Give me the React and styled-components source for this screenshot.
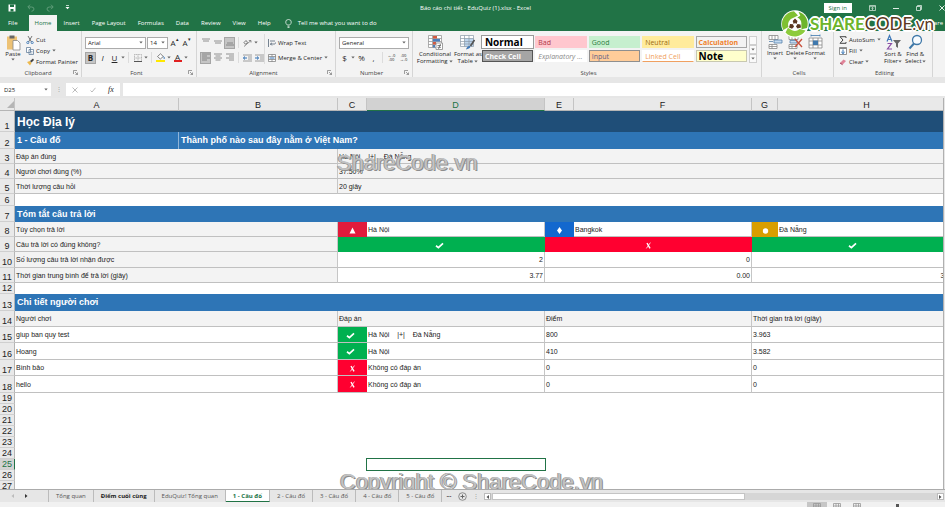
import React from "react";
import styled, { createGlobalStyle, css } from "styled-components";

const menuTabs = [
  "File",
  "Home",
  "Insert",
  "Page Layout",
  "Formulas",
  "Data",
  "Review",
  "View",
  "Help",
];

const cellStyles = [
  { name: "Normal", kind: "normal" },
  { name: "Bad", kind: "bad" },
  { name: "Good", kind: "good" },
  { name: "Neutral", kind: "neutral" },
  { name: "Calculation", kind: "calculation" },
  { name: "Check Cell", kind: "check" },
  { name: "Explanatory ...", kind: "explanatory" },
  { name: "Input", kind: "input" },
  { name: "Linked Cell", kind: "linked" },
  { name: "Note", kind: "note" },
];

const columns = [
  { name: "A", width: 164 },
  { name: "B", width: 159 },
  { name: "C", width: 29 },
  { name: "D", width: 178 },
  { name: "E", width: 29 },
  { name: "F", width: 178 },
  { name: "G", width: 26 },
  { name: "H" },
];

const bothCities = "Hà Nội \u00a0\u00a0 |+| \u00a0\u00a0 Đà Nẵng";

const players = [
  { row: 15, height: 16, name: "giup ban quy test", ok: true, answer: bothCities, score: "800", time: "3.963" },
  { row: 16, height: 17, name: "Hoang", ok: true, answer: "Hà Nội", score: "410", time: "3.582" },
  { row: 17, height: 16, name: "Bình bảo", ok: false, answer: "Không có đáp án", score: "0", time: "0" },
  { row: 18, height: 17, name: "hello", ok: false, answer: "Không có đáp án", score: "0", time: "0" },
];

const emptyRows = [19, 20, 21, 22, 23, 24, 25, 26, 27];

const sheets = [
  "Tổng quan",
  "Điểm cuối cùng",
  "EduQuiz! Tổng quan",
  "1 - Câu đố",
  "2 - Câu đố",
  "3 - Câu đố",
  "4 - Câu đố",
  "5 - Câu đố",
];

function Caret() {
  return (
    <Svg $w={4} $h={3} viewBox="0 0 4 3">
      <path d="M.3.5h3.400L2 2.400z" fill="#666" />
    </Svg>
  );
}

function Check() {
  return (
    <Svg $w={13} $h={7} viewBox="0 0 13 7">
      <path d="M1 3.800 3.400 5.600 8 1.400" fill="none" stroke="#fff" strokeWidth="1.700" />
    </Svg>
  );
}

function Cross() {
  return (
    <Svg $w={7} $h={7} viewBox="0 0 7 7">
      <path d="M2 1l3 5.400" stroke="#fff" strokeWidth="1.400" />
      <path d="M5.400.6 1.400 6.400" stroke="#fff" strokeWidth=".8" />
    </Svg>
  );
}

function Lines({ widths, align = "start", top = 0 }) {
  return (
    <Svg $w={8} $h={9} viewBox="0 0 8 9">
      {widths.map((w, i) => {
        const x = align === "start" ? 0 : align === "end" ? 8 - w : (8 - w) / 2;
        return <path key={i} d={`M${x} ${top + 1 + i * 2}h${w}`} stroke="#777" strokeWidth=".8" />;
      })}
    </Svg>
  );
}

function Indent({ flip }) {
  return (
    <Svg $w={9} $h={8} viewBox="0 0 9 8">
      <path d="M0 1h9M5 3h4M5 5h4M0 7h9" stroke="#888" strokeWidth=".8" />
      <path d={flip ? "M0 4h3.500M2 2.500 3.600 4 2 5.500" : "M4 4H.5M2 2.500.4 4 2 5.500"} fill="none" stroke="#2f6fb3" />
    </Svg>
  );
}

function CellsIcon({ kind }) {
  return (
    <Svg $w={15} $h={16} viewBox="0 0 15 16">
      {kind !== "format" && (
        <path d="M1 1.500h9v4H1zM4 1.500v4M7 1.500v4M1 10.500h8v4H1zM4 10.500v4M1 12.500h8" fill="#fff" stroke="#888" strokeWidth=".8" />
      )}
      {kind === "insert" && <path d="M6 6h8v3H6zM5 7.500H1" fill="#c5dcf2" stroke="#5582ab" strokeWidth=".8" />}
      {kind === "delete" && (
        <>
          <path d="M2 6.500h7v2.500H2z" fill="#c5dcf2" stroke="#5582ab" strokeWidth=".8" />
          <path d="M7 5l7 8M14 5l-7 8" stroke="#c8503c" strokeWidth="1.300" />
        </>
      )}
      {kind === "format" && (
        <>
          <path d="M1 4h13v10H1zM1 7h13M1 11h13M5 4v10M10 4v10" fill="#fff" stroke="#888" strokeWidth=".8" />
          <path d="M5 6.500h5v4.500H5z" fill="#3f78ad" />
          <path d="M3 1.500h9M3 .5v2M12 .5v2" stroke="#3f78ad" strokeWidth=".8" />
        </>
      )}
    </Svg>
  );
}

function Launcher() {
  return (
    <LauncherButton aria-label="More options">
      <Svg $w={5} $h={5} viewBox="0 0 5 5">
        <path d="M.5 4V.5H4M2 2l2.500 2.500M4.500 2.500v2h-2" fill="none" stroke="#777" strokeWidth=".7" />
      </Svg>
    </LauncherButton>
  );
}

function Ribbon() {
  return (
    <RibbonBar>
      <Group $width={82}>
        <GroupBody>
          <BigButton>
            <Svg $w={15} $h={17} viewBox="0 0 15 17">
              <path d="M1 2.500h10v13H1z" fill="#edc275" />
              <path d="M3.500 1.500h5v3h-5z" fill="#666" />
              <path d="M7 6.500h4.500l2.500 2.500v7H7z" fill="#fff" stroke="#888" strokeWidth=".8" />
            </Svg>
            <span>Paste</span>
            <Caret />
          </BigButton>
          <Stack>
            <SmallButton>
              <Svg $w={8} $h={8} viewBox="0 0 8 8">
                <path d="M2 0l3.500 6M6 0 2.500 6" stroke="#555" strokeWidth=".8" />
                <circle cx="1.800" cy="6.600" r="1.100" fill="none" stroke="#2f6fb3" strokeWidth=".8" />
                <circle cx="6.200" cy="6.600" r="1.100" fill="none" stroke="#2f6fb3" strokeWidth=".8" />
              </Svg>
              Cut
            </SmallButton>
            <SmallButton>
              <Svg $w={8} $h={8} viewBox="0 0 8 8">
                <path d="M.5.500h4v5h-4zM3 2.500h4.500v5H3z" fill="#fff" stroke="#66809c" strokeWidth=".8" />
                <path d="M4 4.500h2.500M4 6h2.500" stroke="#66809c" strokeWidth=".6" />
              </Svg>
              Copy
              <Caret />
            </SmallButton>
            <SmallButton>
              <Svg $w={8} $h={8} viewBox="0 0 8 8">
                <path d="M1 4l3-1 1.500 2L4 7.500z" fill="#edb94c" />
                <path d="M4 3l3-2.500 1 1.500-2.500 2.500z" fill="#444" />
              </Svg>
              Format Painter
            </SmallButton>
          </Stack>
        </GroupBody>
        <GroupLabel><span>Clipboard</span><Launcher /></GroupLabel>
      </Group>

      <Group $width={115}>
        <GroupRows>
          <ToolRow>
            <SelectBox $width={61}>
              <select aria-label="Font"><option>Arial</option></select>
              <Caret />
            </SelectBox>
            <SelectBox $width={21}>
              <select aria-label="Font size"><option>14</option></select>
              <Caret />
            </SelectBox>
            <Tool aria-label="Increase font size">A<sup>▴</sup></Tool>
            <Tool aria-label="Decrease font size">A<sup>▾</sup></Tool>
          </ToolRow>
          <ToolRow>
            <Tool $pressed><b>B</b></Tool>
            <Tool><i>I</i></Tool>
            <Tool><u>U</u></Tool>
            <Caret />
            <Divider />
            <Tool aria-label="Borders">
              <Svg $w={8} $h={8} viewBox="0 0 8 8">
                <path d="M.5.500h7v7h-7zM4 .5v7M.5 4h7" fill="none" stroke="#999" strokeWidth=".7" strokeDasharray="1 .6" />
                <path d="M0 7.500h8" stroke="#555" />
              </Svg>
            </Tool>
            <Caret />
            <Divider />
            <Tool aria-label="Fill color">
              <Svg $w={9} $h={9} viewBox="0 0 9 9">
                <path d="M1.500 3.500 4.500.8l2.800 2.700-3 2.500z" fill="#fff" stroke="#666" strokeWidth=".8" />
                <path d="M7.500 3.500c1 1 1 2 .3 2.500" fill="none" stroke="#2f6fb3" />
                <path d="M0 7h9v2H0z" fill="#ffe800" />
              </Svg>
            </Tool>
            <Caret />
            <Tool aria-label="Font color"><FontColor>A</FontColor></Tool>
            <Caret />
          </ToolRow>
        </GroupRows>
        <GroupLabel><span>Font</span><Launcher /></GroupLabel>
      </Group>

      <Group $width={139}>
        <GroupBody>
          <GroupRows $width={64}>
            <ToolRow>
              <Tool aria-label="Top align"><Lines widths={[8, 6]} align="center" /></Tool>
              <Tool aria-label="Middle align"><Lines widths={[8, 6]} align="center" top={2} /></Tool>
              <Tool $pressed aria-label="Bottom align"><Lines widths={[6, 8]} align="center" top={4} /></Tool>
              <Divider />
              <Tool aria-label="Orientation">
                <Svg $w={9} $h={8} viewBox="0 0 9 8">
                  <path d="M1 7.500 8 1.500M5.800 1.500H8v2" fill="none" stroke="#777" strokeWidth=".8" />
                  <path d="M1 3.500l2-2 1.500 1.800-2 2z" fill="none" stroke="#555" strokeWidth=".8" />
                </Svg>
              </Tool>
              <Caret />
            </ToolRow>
            <ToolRow>
              <Tool $pressed aria-label="Align left"><Lines widths={[8, 5, 8, 5]} /></Tool>
              <Tool aria-label="Center"><Lines widths={[8, 5, 8, 5]} align="center" /></Tool>
              <Tool aria-label="Align right"><Lines widths={[8, 5, 8, 5]} align="end" /></Tool>
              <Divider />
              <Tool aria-label="Decrease indent"><Indent /></Tool>
              <Tool aria-label="Increase indent"><Indent flip /></Tool>
            </ToolRow>
          </GroupRows>
          <GroupRows $line>
            <ToolRow>
              <SmallButton>
                <Svg $w={8} $h={8} viewBox="0 0 8 8">
                  <path d="M.5 0v8M2 2h5M2 5h4.500q1 0 1-1.500M4 3.800 2.500 5 4 6.500" fill="none" stroke="#567" strokeWidth=".8" />
                </Svg>
                Wrap Text
              </SmallButton>
            </ToolRow>
            <ToolRow>
              <SmallButton>
                <Svg $w={8} $h={8} viewBox="0 0 8 8">
                  <path d="M.5.500h7v7h-7zM.5 2.500h7M.5 5.500h7M4 .5v2M4 5.500v2" fill="#fff" stroke="#777" strokeWidth=".7" />
                  <path d="M1.500 4h5" stroke="#2f6fb3" />
                </Svg>
                Merge &amp; Center
                <Caret />
              </SmallButton>
            </ToolRow>
          </GroupRows>
        </GroupBody>
        <GroupLabel><span>Alignment</span><Launcher /></GroupLabel>
      </Group>

      <Group $width={77}>
        <GroupRows>
          <ToolRow>
            <SelectBox $width={70}>
              <select aria-label="Number format"><option>General</option></select>
              <Caret />
            </SelectBox>
          </ToolRow>
          <ToolRow>
            <Tool>$</Tool>
            <Caret />
            <Tool>%</Tool>
            <Tool>,</Tool>
            <Divider />
            <Tool aria-label="Increase decimal"><Decimal>←.0<br />.00</Decimal></Tool>
            <Tool aria-label="Decrease decimal"><Decimal>.00<br />→.0</Decimal></Tool>
          </ToolRow>
        </GroupRows>
        <GroupLabel><span>Number</span><Launcher /></GroupLabel>
      </Group>

      <Group $grow>
        <GroupBody>
          <BigButton $wide>
            <Svg $w={15} $h={17} viewBox="0 0 15 17">
              <path d="M.5 1.500h13v12H.5zM.5 4.500h13M.5 7.500h13M.5 10.500h13M4.500 1.500v12" fill="#fff" stroke="#999" strokeWidth=".8" />
              <path d="M5 2h4v2.500H5zM5 8h3v2.500H5z" fill="#d4593f" />
              <path d="M5 5h7v2.500H5zM5 11h2v2.500H5z" fill="#4c7ebb" />
              <path d="M8 9h6.500v6.500H8z" fill="#fff" stroke="#888" strokeWidth=".8" />
              <path d="M9.500 11.500h3.500M9.500 13.300h3.500M12.500 10l-2 5" stroke="#555" strokeWidth=".7" />
            </Svg>
            <span>Conditional</span>
            <span>Formatting <Caret /></span>
          </BigButton>
          <BigButton>
            <Svg $w={15} $h={17} viewBox="0 0 15 17">
              <path d="M.5 1.500h13v11H.5z" fill="#fff" />
              <path d="M4.500 4.500h9v8h-9z" fill="#bcd5ed" />
              <path d="M.5 1.500h13v11H.5zM.5 4.500h13M.5 7.500h13M.5 10h13M4.500 1.500v11M9 1.500v11" fill="none" stroke="#8a9aa8" strokeWidth=".7" />
              <path d="M14.500 6l-4 6" stroke="#555" strokeWidth="1.800" />
              <path d="M6 15.500q1-4 4-3.500 1.500 2-4 3.500z" fill="#3f78b8" />
            </Svg>
            <span>Format as</span>
            <span>Table <Caret /></span>
          </BigButton>
          <Gallery>
            {cellStyles.map((s) => (
              <StyleSwatch key={s.kind} $kind={s.kind}>{s.name}</StyleSwatch>
            ))}
          </Gallery>
          <GalleryScroll>
            <button aria-label="Previous styles" />
            <button aria-label="Next styles"><Caret /></button>
            <button aria-label="More styles"><Caret /></button>
          </GalleryScroll>
        </GroupBody>
        <GroupLabel><span>Styles</span></GroupLabel>
      </Group>

      <Group $width={72}>
        <GroupBody>
          <BigButton><CellsIcon kind="insert" /><span>Insert</span><Caret /></BigButton>
          <BigButton><CellsIcon kind="delete" /><span>Delete</span><Caret /></BigButton>
          <BigButton><CellsIcon kind="format" /><span>Format</span><Caret /></BigButton>
        </GroupBody>
        <GroupLabel><span>Cells</span></GroupLabel>
      </Group>

      <Group $width={99}>
        <GroupBody $gap={2}>
          <Stack $wide>
            <SmallButton>
              <Svg $w={8} $h={8} viewBox="0 0 8 8">
                <path d="M7 2V.7H1l3 3.300-3 3.300h6V6" fill="none" stroke="#444" />
              </Svg>
              AutoSum
              <Caret />
            </SmallButton>
            <SmallButton>
              <Svg $w={8} $h={8} viewBox="0 0 8 8">
                <path d="M.5.500h7v7h-7z" fill="#fff" stroke="#777" strokeWidth=".8" />
                <path d="M.5.500h7v1.500h-7z" fill="#888" />
                <path d="M4 2.500v4M2.300 5 4 6.600 5.700 5" fill="none" stroke="#2f6fb3" />
              </Svg>
              Fill
              <Caret />
            </SmallButton>
            <SmallButton>
              <Svg $w={8} $h={8} viewBox="0 0 8 8">
                <path d="M1 5l3.500-3.500 2.500 1.500L3.500 6.700z" fill="#e08398" />
                <path d="M1 5l2.500 1.700" stroke="#a34a60" />
              </Svg>
              Clear
              <Caret />
            </SmallButton>
          </Stack>
          <BigButton>
            <Svg $w={15} $h={17} viewBox="0 0 15 17">
              <path d="M1 7.500 3.500 1.500 6 7.500M2 5.500h3" fill="none" stroke="#3f78b8" strokeWidth="1.200" />
              <path d="M1.500 9.500h4L1.500 15H6" fill="none" stroke="#8a4ea5" strokeWidth="1.200" />
              <path d="M7 6h8l-3 3.500V14l-2-1.500v-3z" fill="#666" />
            </Svg>
            <span>Sort &amp;</span>
            <span>Filter<Caret /></span>
          </BigButton>
          <BigButton>
            <Svg $w={15} $h={17} viewBox="0 0 15 17">
              <circle cx="9" cy="6" r="4.500" fill="#f7fbff" stroke="#3f78a8" strokeWidth="1.300" />
              <path d="M6 9.500 1.500 14.500" stroke="#3f78a8" strokeWidth="2" />
            </Svg>
            <span>Find &amp;</span>
            <span>Select<Caret /></span>
          </BigButton>
        </GroupBody>
        <GroupLabel><span>Editing</span></GroupLabel>
      </Group>
      <RibbonEnd />
    </RibbonBar>
  );
}

function Sheet() {
  return (
    <SheetArea>
      <Grid>
        <colgroup>
          <Col $width={15} />
          {columns.map((c) => <Col key={c.name} $width={c.width} />)}
        </colgroup>
        <thead>
          <Row $height={13}>
            <ColHead>
              <Svg $w={7} $h={7} viewBox="0 0 7 7"><path d="M7 0v7H0z" fill="#b5b5b5" /></Svg>
            </ColHead>
            {columns.map((c) => (
              <ColHead key={c.name} $selected={c.name === "D"}>{c.name}</ColHead>
            ))}
          </Row>
        </thead>
        <tbody>
          <Row $height={21}>
            <RowHead>1</RowHead>
            <TitleCell colSpan={8}>Học Địa lý</TitleCell>
          </Row>
          <Row $height={17}>
            <RowHead>2</RowHead>
            <SectionCell $line>1 - Câu đố</SectionCell>
            <SectionCell colSpan={7}>Thành phố nào sau đây nằm ở Việt Nam?</SectionCell>
          </Row>
          <Row $height={15}>
            <RowHead>3</RowHead>
            <Cell $shade colSpan={2}>Đáp án đúng</Cell>
            <Cell $shade colSpan={6}>{bothCities}</Cell>
          </Row>
          <Row $height={15}>
            <RowHead>4</RowHead>
            <Cell $shade colSpan={2}>Người chơi đúng (%)</Cell>
            <Cell $shade colSpan={6}>37.50%</Cell>
          </Row>
          <Row $height={15}>
            <RowHead>5</RowHead>
            <Cell $shade colSpan={2}>Thời lượng câu hỏi</Cell>
            <Cell $shade colSpan={6}>20 giây</Cell>
          </Row>
          <Row $height={12}>
            <RowHead>6</RowHead>
            <Blank colSpan={8} />
          </Row>
          <Row $height={16}>
            <RowHead>7</RowHead>
            <SectionCell colSpan={8}>Tóm tắt câu trả lời</SectionCell>
          </Row>
          <Row $height={15}>
            <RowHead>8</RowHead>
            <Cell $shade colSpan={2}>Tùy chọn trả lời</Cell>
            <MarkCell $color="#e21b3c">
              <Svg $w={7} $h={7} viewBox="0 0 7 7"><path d="M3.500.5 6.500 6.500h-6z" fill="#fff" /></Svg>
            </MarkCell>
            <Cell>Hà Nội</Cell>
            <MarkCell $color="#1368ce">
              <Svg $w={7} $h={7} viewBox="0 0 7 7"><path d="M3.500 0 6 3.500 3.500 7 1 3.500z" fill="#fff" /></Svg>
            </MarkCell>
            <Cell>Bangkok</Cell>
            <MarkCell $color="#d89e00">
              <Svg $w={7} $h={7} viewBox="0 0 7 7"><circle cx="3.500" cy="4" r="2.700" fill="#fff" /></Svg>
            </MarkCell>
            <Cell>Đà Nẵng</Cell>
          </Row>
          <Row $height={15}>
            <RowHead>9</RowHead>
            <Cell $shade colSpan={2}>Câu trả lời có đúng không?</Cell>
            <MarkCell colSpan={2} $color="#00b050"><Check /></MarkCell>
            <MarkCell colSpan={2} $color="#ff0030"><Cross /></MarkCell>
            <MarkCell colSpan={2} $color="#00b050"><Check /></MarkCell>
          </Row>
          <Row $height={16}>
            <RowHead>10</RowHead>
            <Cell $shade colSpan={2}>Số lượng câu trả lời nhận được</Cell>
            <Cell $right colSpan={2}>2</Cell>
            <Cell $right colSpan={2}>0</Cell>
            <Cell $right colSpan={2}>1</Cell>
          </Row>
          <Row $height={15}>
            <RowHead>11</RowHead>
            <Cell $shade colSpan={2}>Thời gian trung bình để trả lời (giây)</Cell>
            <Cell $right colSpan={2}>3.77</Cell>
            <Cell $right colSpan={2}>0.00</Cell>
            <Cell $right colSpan={2}>3.96</Cell>
          </Row>
          <Row $height={11}>
            <RowHead>12</RowHead>
            <Blank colSpan={8} />
          </Row>
          <Row $height={17}>
            <RowHead>13</RowHead>
            <SectionCell colSpan={8}>Chi tiết người chơi</SectionCell>
          </Row>
          <Row $height={16}>
            <RowHead>14</RowHead>
            <Cell $shade colSpan={2}>Người chơi</Cell>
            <Cell $shade colSpan={2}>Đáp án</Cell>
            <Cell $shade colSpan={2}>Điểm</Cell>
            <Cell $shade colSpan={2}>Thời gian trả lời (giây)</Cell>
          </Row>
          {players.map((p) => (
            <Row key={p.row} $height={p.height}>
              <RowHead>{p.row}</RowHead>
              <Cell colSpan={2}>{p.name}</Cell>
              <MarkCell $line $color={p.ok ? "#00b050" : "#ff0030"}>{p.ok ? <Check /> : <Cross />}</MarkCell>
              <Cell>{p.answer}</Cell>
              <Cell colSpan={2}>{p.score}</Cell>
              <Cell colSpan={2}>{p.time}</Cell>
            </Row>
          ))}
          {emptyRows.map((n) => (
            <Row key={n} $height={11}>
              <RowHead $selected={n === 25}>{n}</RowHead>
              <Blank colSpan={3} />
              <Blank $selected={n === 25} />
              <Blank colSpan={4} />
            </Row>
          ))}
        </tbody>
      </Grid>
      <Watermark $left={337} $top={53}>ShareCode.vn</Watermark>
      <Watermark $left={340} $top={372}>Copyright © ShareCode.vn</Watermark>
    </SheetArea>
  );
}

function App() {
  return (
    <>
      <GlobalStyle />
      <Window>
        <TitleBar>
          <QuickAccess>
            <button aria-label="Save">
              <Svg $w={8} $h={8} viewBox="0 0 8 8">
                <path d="M.5.500h7v7h-7z" fill="#fff" />
                <path d="M2 .5h4v2.500H2zM2.500 5h3v2.500h-3z" fill="#217346" />
              </Svg>
            </button>
            <button aria-label="Undo">
              <Svg $w={8} $h={8} viewBox="0 0 8 8">
                <path d="M3 .7.8 3 3 5.200M1 3h3.500Q7 3 7 5t-2.500 2.300" fill="none" stroke="#5f9c79" />
              </Svg>
            </button>
            <button aria-label="Redo">
              <Svg $w={8} $h={8} viewBox="0 0 8 8">
                <path d="M5 .7 7.200 3 5 5.200M7 3H3.500Q1 3 1 5t2.500 2.300" fill="none" stroke="#5f9c79" />
              </Svg>
            </button>
            <button aria-label="Customize toolbar">
              <Svg $w={5} $h={5} viewBox="0 0 5 5">
                <path d="M1 .5h3" stroke="#fff" strokeWidth=".7" />
                <path d="M.5 2h4L2.500 4.300z" fill="#fff" />
              </Svg>
            </button>
          </QuickAccess>
          <DocTitle>Báo cáo chi tiết - EduQuiz (1).xlsx - Excel</DocTitle>
          <WindowButtons>
            <SignIn>Sign in</SignIn>
            <button aria-label="Ribbon display options">
              <Svg $w={7} $h={6} viewBox="0 0 7 6">
                <path d="M.5.500h6v5h-6zM.5 1.700h6M3.500 5V2.700M2.500 3.500l1-1 1 1" fill="none" stroke="#dfece4" strokeWidth=".7" />
              </Svg>
            </button>
            <button aria-label="Minimize">
              <Svg $w={6} $h={6} viewBox="0 0 6 6"><path d="M0 3.500h6" stroke="#dfece4" /></Svg>
            </button>
            <button aria-label="Restore">
              <Svg $w={6} $h={6} viewBox="0 0 6 6">
                <path d="M.5 1.500h4v4h-4zM1.500 1.500v-1h4v4h-1" fill="none" stroke="#dfece4" strokeWidth=".8" />
              </Svg>
            </button>
            <button aria-label="Close">
              <Svg $w={6} $h={6} viewBox="0 0 6 6"><path d="M.5.500l5 5M5.500.500l-5 5" stroke="#dfece4" /></Svg>
            </button>
          </WindowButtons>
        </TitleBar>
        <MenuBar>
          {menuTabs.map((t) => (
            <MenuTab key={t} $active={t === "Home"}>{t}</MenuTab>
          ))}
          <TellMe>
            <Svg $w={7} $h={9} viewBox="0 0 7 9">
              <path d="M2.300 6Q.7 4.700.7 3a2.800 2.500 0 0 1 5.600 0Q6.300 4.700 4.700 6zM2.500 7.300h2M2.500 8.500h2" fill="none" stroke="#fff" strokeWidth=".7" />
            </Svg>
            Tell me what you want to do
          </TellMe>
          <Share>Share</Share>
        </MenuBar>
        <Brand>
          <Svg $w={30} $h={28} viewBox="0 0 30 28">
            <circle cx="15" cy="14" r="13.800" fill="#fff" />
            <path d="M3.300 20A13 13 0 0 1 14 1.200l4 4.300-4.500 2.300A7 7 0 0 0 8.500 17z" fill="#7fc031" />
            <path d="M18.500 1.800A12.600 12.600 0 0 1 27 18l-5.500 1.200-.2-4.500a7 7 0 0 0-4-7.200l3-1.800z" fill="#6db52b" />
            <path d="M25.500 20.500A12.600 12.600 0 0 1 5.500 22.500L8 17.700l4 2.500a7 7 0 0 0 7.500-1.200z" fill="#8ccb3c" />
            <path d="M15 8.500l2.500 2.500-.8 2.800-3 .2-1-3zM9 17.500l1-3.500 3 .3 1 2.500-2 2zM21 17.500l-3.500 1-1.500-2 1.500-2.500 3 .5z" fill="#5c3720" />
            <circle cx="15" cy="14.500" r="1.300" fill="#fff" />
          </Svg>
          <BrandName><b>SHARE</b>CODE.vn</BrandName>
        </Brand>
        <Ribbon />
        <FormulaBar>
          <NameBox>
            <input aria-label="Name box" defaultValue="D25" />
            <Caret />
          </NameBox>
          <Grip>⋮</Grip>
          <FormulaTools>
            <button aria-label="Cancel">
              <Svg $w={6} $h={6} viewBox="0 0 6 6"><path d="M.5.500l5 5M5.500.500l-5 5" stroke="#bbb" /></Svg>
            </button>
            <button aria-label="Enter">
              <Svg $w={6} $h={6} viewBox="0 0 6 6"><path d="M.5 3.500 2 5 5.500.8" fill="none" stroke="#bbb" /></Svg>
            </button>
            <button aria-label="Insert function"><i>fx</i></button>
          </FormulaTools>
          <FormulaInput aria-label="Formula" />
        </FormulaBar>
        <Sheet />
        <SheetTabs>
          <SheetNav>
            <button aria-label="Previous sheets">
              <Svg $w={3} $h={4} viewBox="0 0 3 4"><path d="M3 0v4L.5 2z" fill="#bbb" /></Svg>
            </button>
            <button aria-label="Next sheets">
              <Svg $w={3} $h={4} viewBox="0 0 3 4"><path d="M0 0v4l2.500-2z" fill="#333" /></Svg>
            </button>
          </SheetNav>
          {sheets.map((s, i) => (
            <SheetTab key={s} $active={i === 3} $strong={i === 1}>{s}</SheetTab>
          ))}
          <MoreSheets>...</MoreSheets>
          <AddSheet aria-label="New sheet">
            <Svg $w={9} $h={9} viewBox="0 0 9 9">
              <circle cx="4.500" cy="4.500" r="3.800" fill="none" stroke="#777" strokeWidth=".8" />
              <path d="M4.500 2.500v4M2.500 4.500h4" stroke="#666" />
            </Svg>
          </AddSheet>
          <Grip>⋮</Grip>
          <ScrollTrack>
            <ScrollButton aria-label="Scroll left">
              <Svg $w={3} $h={4} viewBox="0 0 3 4"><path d="M3 0v4L.5 2z" fill="#555" /></Svg>
            </ScrollButton>
            <ScrollThumb />
            <ScrollButton $end aria-label="Scroll right">
              <Svg $w={3} $h={4} viewBox="0 0 3 4"><path d="M0 0v4l2.500-2z" fill="#555" /></Svg>
            </ScrollButton>
          </ScrollTrack>
        </SheetTabs>
        <StatusBar>
          {["Normal view", "Page layout view", "Page break view"].map((v, i) => (
            <ViewButton key={v} aria-label={v} $active={i === 0}>
              <Svg $w={8} $h={8} viewBox="0 0 8 8">
                <path d="M.5.500h7v7h-7zM.5 3h7M3 .5v7M5.500.500v7" fill="none" stroke="#999" strokeWidth=".8" />
              </Svg>
            </ViewButton>
          ))}
          <Zoom type="range" aria-label="Zoom" defaultValue="50" />
        </StatusBar>
      </Window>
    </>
  );
}

export default App;

const uiFont = `"Open Sans", "Noto Sans", sans-serif`;
const cellFont = `"Liberation Sans", Arial, sans-serif`;

const GlobalStyle = createGlobalStyle`
  * {
    box-sizing: border-box;
  }
  body {
    margin: 0;
    overflow: hidden;
  }
  button, input, select {
    margin: 0;
    padding: 0;
    border: 0;
    border-radius: 0;
    background: none;
    color: inherit;
    font: inherit;
    appearance: none;
    outline: none;
  }
`;

const Svg = styled.svg`
  display: inline-block;
  flex: none;
  width: ${(p) => p.$w}px;
  height: ${(p) => p.$h}px;
`;

const Window = styled.div`
  position: relative;
  display: flex;
  flex-direction: column;
  height: 100vh;
  overflow: hidden;
  background: #e6e6e6;
  color: #262626;
  font: 6px/8px ${uiFont};
  white-space: nowrap;
`;

const TitleBar = styled.header`
  display: grid;
  grid-template-columns: 1fr auto 1fr;
  align-items: center;
  flex: none;
  height: 15px;
  background: #217346;
  color: #fff;
`;

const QuickAccess = styled.div`
  display: flex;
  align-items: center;
  gap: 11px;
  padding-left: 8px;

  button {
    display: flex;
  }
`;

const DocTitle = styled.div`
  padding-left: 6px;
`;

const WindowButtons = styled.div`
  display: flex;
  align-items: center;
  justify-content: flex-end;
  gap: 17px;

  button {
    display: flex;
  }
`;

const SignIn = styled.button`
  padding: 1px 5px;
  background: #fff;
  color: #217346;
`;

const MenuBar = styled.nav`
  display: flex;
  flex: none;
  height: 16px;
  background: #217346;
  color: #fff;
`;

const MenuTab = styled.button`
  padding: 0 6px;

  &:first-child {
    padding: 0 11px 0 8px;
  }

  ${(p) =>
    p.$active &&
    css`
      background: #f3f3f3;
      color: #217346;
    `}
`;

const TellMe = styled.button`
  display: flex;
  align-items: center;
  gap: 6px;
  padding-left: 8px;
`;

const Share = styled.button`
  margin-left: auto;
  padding-right: 2px;
`;

const Brand = styled.div`
  position: absolute;
  top: 10px;
  right: 11px;
  z-index: 2;
  display: flex;
  align-items: center;
`;

const BrandName = styled.span`
  color: #5c3720;
  font: 17px/24px Lato, sans-serif;
  text-shadow: 1px 0 #fff, -1px 0 #fff, 0 1px #fff, 0 -1px #fff, 1px 1px #fff,
    -1px -1px #fff, 1px -1px #fff, -1px 1px #fff, 2px 0 #fff, 0 2px #fff,
    -2px 0 #fff, 0 -2px #fff;

  b {
    color: #6db52b;
    font-weight: 700;
  }
`;

const RibbonBar = styled.div`
  display: flex;
  flex: none;
  height: 46px;
  background: #f3f3f3;
`;

const Group = styled.section`
  display: flex;
  flex-direction: column;
  justify-content: space-between;
  flex: ${(p) => (p.$grow ? "1 1 0" : `0 0 ${p.$width}px`)};
  min-width: 0;
  padding: 3px 0 0 3px;
  border-right: 1px solid #d5d5d5;
`;

const RibbonEnd = styled.div`
  flex: 0 0 12px;
`;

const GroupBody = styled.div`
  display: flex;
  align-items: flex-start;
  gap: ${(p) => p.$gap || 0}px;
`;

const GroupRows = styled.div`
  display: grid;
  grid-template-rows: 15px 15px;
  ${(p) => p.$width && `width: ${p.$width}px;`}
  ${(p) => p.$line && "padding-left: 3px; border-left: 1px solid #dcdcdc;"}
`;

const ToolRow = styled.div`
  display: flex;
  align-items: center;
  gap: 1px;
  padding-top: 2px;
`;

const GroupLabel = styled.div`
  display: flex;
  align-items: center;
  height: 9px;
  color: #444;

  span {
    flex: 1;
    text-align: center;
  }
`;

const LauncherButton = styled.button`
  display: flex;
  margin-right: 3px;
`;

const BigButton = styled.button`
  display: flex;
  flex-direction: column;
  align-items: center;
  min-width: ${(p) => (p.$wide ? 38 : 20)}px;

  span {
    line-height: 7px;
  }
`;

const Stack = styled.div`
  display: grid;
  grid-template-rows: repeat(3, 11px);
  justify-items: start;
  padding-left: ${(p) => (p.$wide ? 2 : 3)}px;
  min-width: ${(p) => (p.$wide ? 44 : 0)}px;
`;

const SmallButton = styled.button`
  display: flex;
  align-items: center;
  gap: 2px;
`;

const SelectBox = styled.label`
  display: flex;
  align-items: center;
  width: ${(p) => p.$width}px;
  height: 12px;
  padding: 0 2px;
  border: 1px solid #ababab;
  background: #fff;

  select {
    flex: 1;
    min-width: 0;
  }
`;

const Tool = styled.button`
  display: flex;
  align-items: center;
  justify-content: center;
  min-width: 11px;
  height: 12px;
  font-size: 8px;
  background: ${(p) => (p.$pressed ? "#c5c5c5" : "none")};
  box-shadow: ${(p) => (p.$pressed ? "inset 0 0 0 1px #a5a5a5" : "none")};

  sup {
    align-self: flex-start;
    font-size: 5px;
    line-height: 5px;
  }
`;

const Divider = styled.span`
  width: 1px;
  height: 11px;
  margin: 0 2px;
  background: #dcdcdc;
`;

const FontColor = styled.span`
  width: 8px;
  border-bottom: 2px solid #e02020;
  line-height: 7px;
`;

const Decimal = styled.span`
  font-size: 4px;
  line-height: 4px;
`;

const Gallery = styled.div`
  display: grid;
  grid-template-columns: repeat(5, 1fr);
  grid-auto-rows: 12px;
  gap: 2px;
  flex: 1;
  min-width: 0;
  margin-top: 2px;
  padding-right: 2px;
`;

const swatches = {
  normal: "outline: 1px solid #9b9b9b; background: #fff; color: #000; font: bold 10px/10px 'Open Sans', sans-serif;",
  bad: "background: #ffc7ce; color: #b03848;",
  good: "background: #c6efce; color: #2e7d43;",
  neutral: "background: #ffeb9c; color: #9c6a10;",
  calculation: "border-color: #a5a5a5; background: #f2f2f2; color: #f0812c; font-weight: bold;",
  check: "border: 1px solid #555; background: #a5a5a5; color: #fff; font-weight: bold;",
  explanatory: "background: #fff; color: #8a8a8a; font-style: italic;",
  input: "border-color: #8f8f8f; background: #ffcc99; color: #5f5f86;",
  linked: "border-bottom-color: #f0a060; background: #fff; color: #f0a060;",
  note: "border-color: #c8c8b0; background: #ffffcc; color: #000; font: bold 10px/10px 'Open Sans', sans-serif;",
};

const StyleSwatch = styled.button`
  overflow: hidden;
  padding: 0 2px;
  border: 1px solid transparent;
  font-size: 7px;
  line-height: 9px;
  text-align: left;
  ${(p) => swatches[p.$kind]}
`;

const GalleryScroll = styled.div`
  display: grid;
  grid-template-rows: repeat(3, 9px);
  flex: 0 0 8px;
  margin: 2px 4px 0 0;

  button {
    display: flex;
    align-items: center;
    justify-content: center;
    border: 1px solid #cfcfcf;
    background: #fafafa;
  }
`;

const FormulaBar = styled.div`
  display: flex;
  flex: none;
  height: 13px;
  margin: 6px 0 2px;
`;

const NameBox = styled.label`
  display: flex;
  align-items: center;
  width: 51px;
  padding: 0 3px 0 4px;
  background: #fff;

  input {
    flex: 1;
    min-width: 0;
  }
`;

const Grip = styled.span`
  width: 15px;
  color: #999;
  line-height: 13px;
  text-align: center;
`;

const FormulaTools = styled.div`
  display: grid;
  grid-template-columns: repeat(3, 1fr);
  width: 54px;
  margin-right: 3px;
  background: #fff;

  button {
    display: flex;
    align-items: center;
    justify-content: center;
  }

  i {
    font: italic 8px/8px "Liberation Serif", serif;
  }
`;

const FormulaInput = styled.input`
  flex: 1;
  background: #fff;
`;

const SheetArea = styled.main`
  position: relative;
  flex: 1;
  min-height: 0;
  margin-right: 1px;
  overflow: hidden;
  border-right: 1px solid #b0b0b0;
  background: #fff;
`;

/* the last column runs on past the visible edge */
const Grid = styled.table`
  width: calc(100% + 13px);
  table-layout: fixed;
  border-collapse: separate;
  border-spacing: 0;
  font: 7px/9px ${cellFont};
  color: #222;

  td,
  th {
    padding: 0;
  }
`;

const Col = styled.col`
  width: ${(p) => (p.$width ? `${p.$width}px` : "auto")};
`;

const Row = styled.tr`
  height: ${(p) => p.$height}px;
`;

const ColHead = styled.th`
  border-right: 1px solid #c4c4c4;
  border-bottom: 1px solid ${(p) => (p.$selected ? "#217346" : "#b5b5b5")};
  background: ${(p) => (p.$selected ? "#d2d2d2" : "#e9e9e9")};
  color: ${(p) => (p.$selected ? "#217346" : "#222")};
  font-size: 9px;
  font-weight: normal;
  line-height: 10px;
  vertical-align: bottom;

  &:first-child {
    text-align: right;
  }
`;

const RowHead = styled.th`
  border-right: 1px solid ${(p) => (p.$selected ? "#217346" : "#b5b5b5")};
  border-bottom: 1px solid #cfcfcf;
  background: ${(p) => (p.$selected ? "#d2d2d2" : "#e9e9e9")};
  color: ${(p) => (p.$selected ? "#217346" : "#222")};
  font-size: 9px;
  font-weight: normal;
  line-height: 10px;
  text-align: center;
  vertical-align: bottom;
`;

const Cell = styled.td`
  && {
    padding: 0 1px;
  }
  border-right: 1px solid #c6c6c6;
  border-bottom: 1px solid #c0c0c0;
  background: ${(p) => (p.$shade ? "#f3f3f3" : "#fff")};
  text-align: ${(p) => (p.$right ? "right" : "left")};
`;

const TitleCell = styled.td`
  && {
    padding-left: 2px;
  }
  background: #1f4e78;
  color: #fff;
  font-size: 12px;
  font-weight: bold;
  line-height: 14px;
`;

const SectionCell = styled.td`
  && {
    padding-left: 2px;
  }
  border-right: ${(p) => (p.$line ? "1px solid #8fb4d8" : "0")};
  background: #2e75b6;
  color: #fff;
  font-size: 9px;
  font-weight: bold;
  line-height: 11px;
`;

const MarkCell = styled.td`
  border-bottom: ${(p) => (p.$line ? "1px solid #c0c0c0" : "0")};
  background: ${(p) => p.$color};
  text-align: center;

  svg {
    vertical-align: middle;
  }
`;

const Blank = styled.td`
  ${(p) => p.$selected && "outline: 1px solid #217346;"}
`;

const Watermark = styled.div`
  position: absolute;
  top: ${(p) => p.$top}px;
  left: ${(p) => p.$left}px;
  color: #c2c2c2;
  font: 22px/24px ${cellFont};
  text-shadow: -1px 0 #999, 1px 1px #8c8c8c;
  pointer-events: none;
`;

const SheetTabs = styled.nav`
  display: flex;
  flex: none;
  height: 13px;
  border-top: 1px solid #ababab;
  background: #e6e6e6;
`;

const SheetNav = styled.div`
  display: flex;
  align-items: center;
  gap: 11px;
  width: 49px;
  padding-left: 11px;
  border-right: 1px solid #bbb;
`;

const SheetTab = styled.button`
  padding: 0 7px;
  border-right: 1px solid #bbb;
  color: #555;

  ${(p) => p.$strong && "color: #222; font-weight: bold;"}
  ${(p) =>
    p.$active &&
    css`
      border-bottom: 1px solid #217346;
      background: #fff;
      color: #217346;
      font-weight: bold;
    `}
`;

const MoreSheets = styled.span`
  padding: 0 4px;
  font-weight: bold;
  line-height: 11px;
`;

const AddSheet = styled.button`
  display: flex;
  align-items: center;
  padding: 0 2px;
`;

const ScrollTrack = styled.div`
  display: flex;
  flex: 1;
  margin: 3px 1px 2px 0;
  background: #d6d6d6;
`;

const ScrollButton = styled.button`
  display: flex;
  align-items: center;
  justify-content: center;
  width: 7px;
  margin-left: ${(p) => (p.$end ? "auto" : "0")};
  border: 1px solid #bbb;
  background: #fff;
`;

const ScrollThumb = styled.div`
  width: 55%;
  margin-left: 1px;
  border: 1px solid #c4c4c4;
  background: #fff;
`;

const StatusBar = styled.footer`
  display: flex;
  justify-content: flex-end;
  flex: none;
  height: 5px;
  overflow: hidden;
  background: #f1f1f1;
`;

const ViewButton = styled.button`
  display: flex;
  justify-content: center;
  width: 20px;
  height: 9px;
  padding-top: 1px;
  background: ${(p) => (p.$active ? "#c6c6c6" : "none")};
`;

const Zoom = styled.input`
  width: 60px;
  height: 6px;
  margin-right: 18px;

  &::-webkit-slider-thumb {
    appearance: none;
    width: 3px;
    height: 5px;
    margin-top: 2px;
    background: #555;
  }
`;
